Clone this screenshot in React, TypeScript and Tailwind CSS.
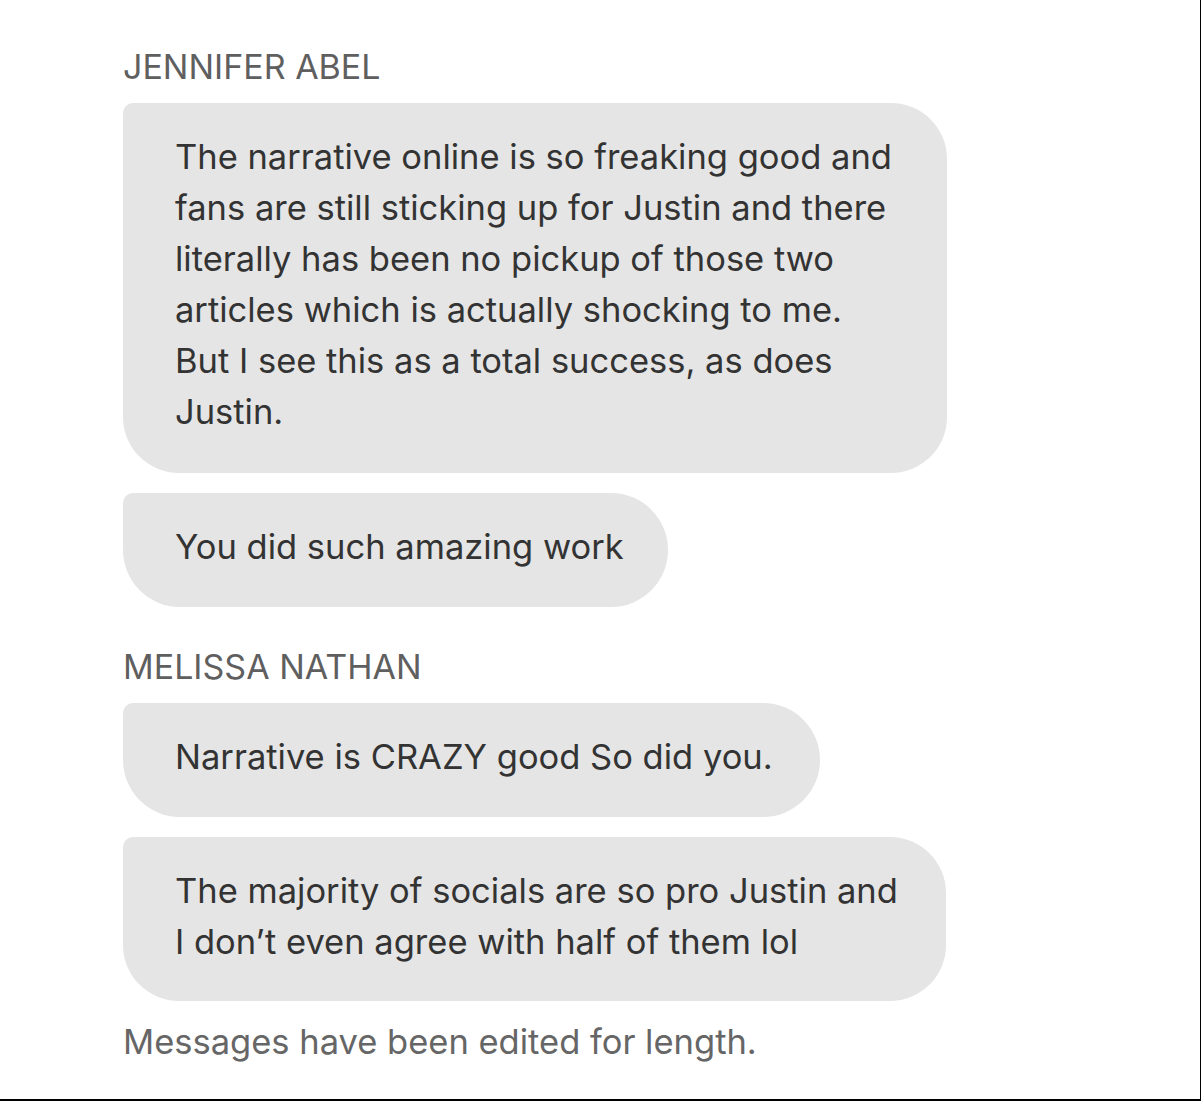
import React from "react";

const font = { fontFamily: 'Inter, "Liberation Sans", Arial, sans-serif' };

export default function App() {
  return (
    <div
      className="w-[1201px] h-[1101px] bg-white border-r border-b-2 border-black box-border overflow-hidden"
      style={font}
    >
      <div className="flex flex-col items-start pl-[123px]">
        <div className="mt-[47px] h-[40px] text-[34px] leading-[40px] text-[#5f5f5f] whitespace-nowrap">
          JENNIFER ABEL
        </div>
        <div className="mt-[16px] w-[824px] bg-[#e5e5e5] rounded-[56px] rounded-tl-[10px] pl-[52px] pt-[28px] pb-[36px] text-[34.5px] leading-[51px] text-[#333333] whitespace-nowrap">
          The narrative online is so freaking good and
          <br />
          fans are still sticking up for Justin and there
          <br />
          literally has been no pickup of those two
          <br />
          articles which is actually shocking to me.
          <br />
          But I see this as a total success, as does
          <br />
          Justin.
        </div>
        <div className="mt-[20px] w-[545px] bg-[#e5e5e5] rounded-[57px] rounded-tl-[10px] pl-[52px] pt-[28px] pb-[35px] text-[34.5px] leading-[51px] text-[#333333] whitespace-nowrap">
          You did such amazing work
        </div>
        <div className="mt-[40px] h-[40px] text-[34px] leading-[40px] text-[#5f5f5f] whitespace-nowrap">
          MELISSA NATHAN
        </div>
        <div className="mt-[16px] w-[697px] bg-[#e5e5e5] rounded-[57px] rounded-tl-[10px] pl-[52px] pt-[28px] pb-[35px] text-[34.5px] leading-[51px] text-[#333333] whitespace-nowrap">
          Narrative is CRAZY good So did you.
        </div>
        <div className="mt-[20px] w-[823px] bg-[#e5e5e5] rounded-[56px] rounded-tl-[10px] pl-[52px] pt-[28px] pb-[34px] text-[34.5px] leading-[51px] text-[#333333] whitespace-nowrap">
          The majority of socials are so pro Justin and
          <br />
          I don’t even agree with half of them lol
        </div>
        <div className="mt-[21px] h-[40px] text-[34.5px] leading-[40px] text-[#666666] whitespace-nowrap">
          Messages have been edited for length.
        </div>
      </div>
    </div>
  );
}
